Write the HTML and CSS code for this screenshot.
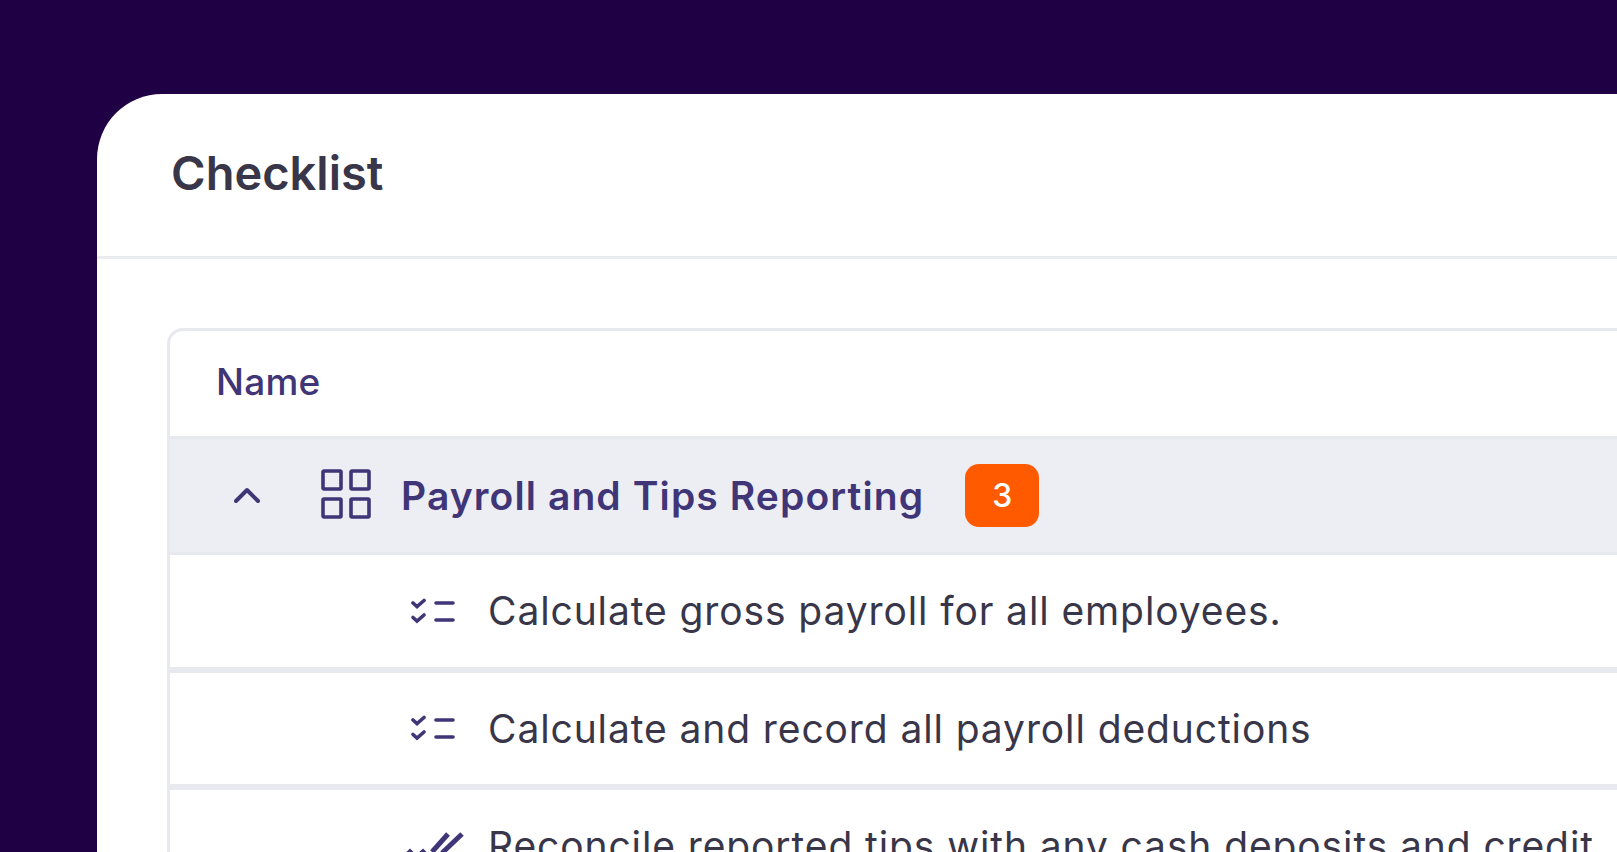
FILE: index.html
```html
<!DOCTYPE html>
<html lang="en">
<head>
  <meta charset="UTF-8">
  <title>Checklist</title>
  <link rel="stylesheet" href="styles.css">
</head>
<body>
  <div class="panel">
    <div class="panel-header">Checklist</div>
    <div class="panel-body">
      <div class="table">
        <div class="table-head">Name</div>

        <!-- Group row -->
        <div class="group-row">
          <svg class="chevron" width="26" height="16" viewBox="0 0 26 16"><path d="M2 14 L13 3 L24 14" fill="none" stroke="#3f3577" stroke-width="4" stroke-linecap="round" stroke-linejoin="round"/></svg>
          <svg class="grid-icon" width="50" height="50" viewBox="0 0 50 50" fill="none" stroke="#3f3577" stroke-width="3.6">
            <rect x="2" y="2" width="18" height="18" rx="1"/>
            <rect x="30" y="2" width="18" height="18" rx="1"/>
            <rect x="2" y="30" width="18" height="18" rx="1"/>
            <rect x="30" y="30" width="18" height="18" rx="1"/>
          </svg>
          <span class="group-name">Payroll and Tips Reporting</span>
          <span class="badge">3</span>
        </div>

        <div class="task-row">
          <svg class="task-icon" width="50" height="26" viewBox="0 0 50 26" fill="none" stroke="#3f3577" stroke-width="3.6" stroke-linecap="round">
            <path d="M7 5 L11 8.5 L18 2.5"/><path d="M7 19.5 L11 23 L18 17"/>
            <path d="M30 5 H47"/><path d="M30 22 H47"/>
          </svg>
          <span>Calculate gross payroll for all employees.</span>
        </div>
        <div class="task-row">
          <svg class="task-icon" width="50" height="26" viewBox="0 0 50 26" fill="none" stroke="#3f3577" stroke-width="3.6" stroke-linecap="round">
            <path d="M7 5 L11 8.5 L18 2.5"/><path d="M7 19.5 L11 23 L18 17"/>
            <path d="M30 5 H47"/><path d="M30 22 H47"/>
          </svg>
          <span>Calculate and record all payroll deductions</span>
        </div>
        <div class="task-row">
          <svg class="task-icon" width="60" height="30" viewBox="0 0 60 30" fill="none" stroke="#3f3577" stroke-width="5">
            <path d="M-2 27 L4 21 L10 27 L17 21 L23 27"/><path d="M26 21 L42 3"/><path d="M36 22 L56 3"/>
          </svg>
          <span class="tight">Reconcile reported tips with any cash deposits and credit</span>
        </div>
      </div>
    </div>
  </div>
</body>
</html>
```

FILE: styles.css
```css
html, body {
  margin: 0;
  height: 100%;
  overflow: hidden;
}
body {
  background: #1f0044;
  font-family: Inter, sans-serif;
  color: #383648;
  padding: 94px 0 0 97px;
  box-sizing: border-box;
}
.panel {
  background: #ffffff;
  border-top-left-radius: 65px;
  height: 758px;
  overflow: hidden;
}
.panel-header {
  height: 156px;
  padding: 0 0 6px 74px;
  border-bottom: 3px solid #ebebf2;
  display: flex;
  align-items: center;
  font-size: 47px;
  font-weight: 600;
}
.panel-body {
  padding: 69px 0 0 70px;
}
.table {
  border: 3px solid #e8e8ef;
  border-right: none;
  border-top-left-radius: 16px;
}
.table-head {
  height: 100px;
  padding: 0 0 5px 46px;
  display: flex;
  align-items: center;
  font-size: 37px;
  font-weight: 500;
  letter-spacing: 0.25px;
  color: #3f3577;
  border-bottom: 3px solid #e8e8ef;
}
.group-row {
  height: 112px;
  background: #edeef4;
  display: flex;
  align-items: center;
  padding: 0 0 1px 64px;
  border-bottom: 3px solid #e8e8ef;
}
.grid-icon {
  margin: 0 0 2px 61px;
}
.group-name {
  margin-left: 30px;
  font-size: 39px;
  font-weight: 600;
  letter-spacing: 1.1px;
  color: #3f3577;
}
.badge {
  margin-left: 41px;
  width: 74px;
  height: 63px;
  border-radius: 14px;
  background: #ff5a00;
  color: #ffffff;
  font-size: 32px;
  font-weight: 500;
  display: flex;
  align-items: center;
  justify-content: center;
}
.task-row {
  height: 111.5px;
  display: flex;
  align-items: center;
  padding-left: 236px;
  border-bottom: 6px solid #e8e8ef;
  font-size: 39px;
  letter-spacing: 0.89px;
}
.task-row span {
  margin-left: 32px;
  white-space: nowrap;
}
.task-row .tight {
  margin-left: 22px;
}
```
